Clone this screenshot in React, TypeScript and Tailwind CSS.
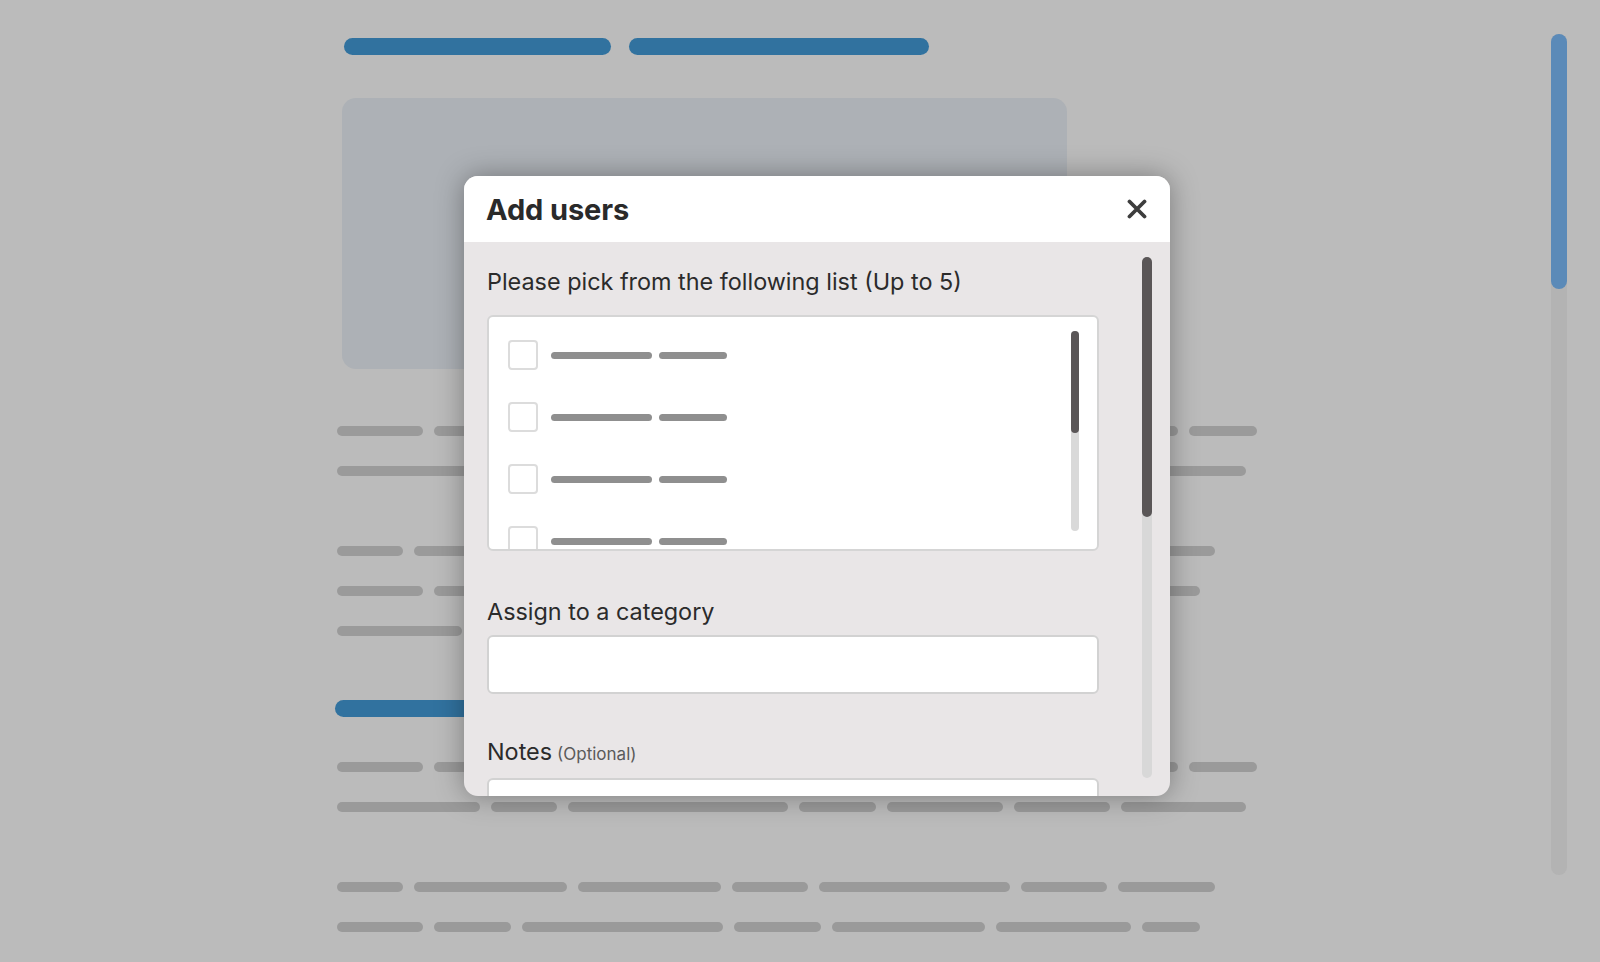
import React from "react";

// background placeholder rows (segment widths in px)
const rowA = [86, 126, 119, 179, 119, 157, 68];
const rowB = [143, 66, 220, 77, 116, 96, 125];
const rowC = [66, 153, 143, 76, 191, 86, 97];
const rowD = [86, 77, 201, 87, 153, 135, 58];
const rowE = [125];

const TextRow: React.FC<{ widths: number[]; className?: string }> = ({ widths, className = "" }) => (
  <div className={`flex gap-[11px] h-[10px] ml-[2px] ${className}`}>
    {widths.map((w, i) => (
      <div key={i} className="h-[10px] rounded-full bg-[#9a9a9a]" style={{ width: w }} />
    ))}
  </div>
);

const ListRow: React.FC = () => (
  <div className="flex items-center h-[30px] mb-[32px] shrink-0">
    <div className="w-[30px] h-[30px] rounded-[4px] border-2 border-[#dcdcdc] bg-white shrink-0" />
    <div className="ml-[13px] h-[7px] w-[101px] rounded-full bg-[#8f8f8f]" />
    <div className="ml-[7px] h-[7px] w-[68px] rounded-full bg-[#8f8f8f]" />
  </div>
);

const CloseIcon: React.FC = () => (
  <svg width="20" height="20" viewBox="0 0 20 20" fill="none">
    <path d="M2.5 2.5 L17.5 17.5 M17.5 2.5 L2.5 17.5" stroke="#3d3d3d" strokeWidth="3.8" strokeLinecap="round" />
  </svg>
);

export default function App() {
  return (
    <div className="relative w-[1600px] h-[962px] overflow-hidden bg-[#bbbbbb] font-['Inter',sans-serif]">
      {/* page behind the dialog */}
      <div className="flex flex-col pl-[335px] pt-[38px]">
        <div className="flex gap-[18px] ml-[9px]">
          <div className="h-[17px] w-[267px] rounded-full bg-[#31729f]" />
          <div className="h-[17px] w-[300px] rounded-full bg-[#31729f]" />
        </div>
        <div className="mt-[43px] ml-[7px] h-[271px] w-[725px] rounded-[14px] bg-[#adb1b6]" />

        <TextRow widths={rowA} className="mt-[57px]" />
        <TextRow widths={rowB} className="mt-[30px]" />

        <TextRow widths={rowC} className="mt-[70px]" />
        <TextRow widths={rowD} className="mt-[30px]" />
        <TextRow widths={rowE} className="mt-[30px]" />

        <div className="mt-[64px] h-[17px] w-[260px] rounded-full bg-[#31729f]" />

        <TextRow widths={rowA} className="mt-[45px]" />
        <TextRow widths={rowB} className="mt-[30px]" />

        <TextRow widths={rowC} className="mt-[70px]" />
        <TextRow widths={rowD} className="mt-[30px]" />
        <TextRow widths={rowE} className="mt-[30px]" />
      </div>

      {/* page scrollbar */}
      <div className="absolute left-[1551px] top-[34px] w-[16px] h-[841px] rounded-full bg-[#b3b3b3]">
        <div className="h-[255px] w-full rounded-full bg-[#5b8ab8]" />
      </div>

      {/* dialog */}
      <div className="absolute left-[464px] top-[176px] w-[706px] h-[620px] flex flex-col overflow-hidden rounded-[14px] bg-[#e9e6e7] shadow-[0_0_28px_rgba(0,0,0,0.35)]">
        <div className="flex items-center justify-between h-[66px] shrink-0 bg-white pl-[22px] pr-[23px]">
          <h2 className="pt-[2px] text-[29px] leading-[34px] font-bold text-[#2a2a2a] tracking-[-0.1px]">Add users</h2>
          <button className="flex items-center justify-center w-[20px] h-[20px]">
            <CloseIcon />
          </button>
        </div>

        <div className="flex flex-1 min-h-0">
          <div className="w-[635px] shrink-0 pl-[23px] pt-[24.5px] overflow-hidden text-[#2b2b2b]">
            <div className="text-[23.4px] leading-[30px]">Please pick from the following list (Up to 5)</div>

            <div className="mt-[18.5px] flex h-[236px] w-[612px] overflow-hidden rounded-[6px] border-2 border-[#d5d5d5] bg-white">
              <div className="flex flex-1 flex-col pl-[19px] pt-[23px] overflow-hidden">
                <ListRow />
                <ListRow />
                <ListRow />
                <ListRow />
              </div>
              <div className="mr-[18px] mt-[14px] h-[200px] w-[8px] rounded-full bg-[#d9d9d9]">
                <div className="h-[102px] w-full rounded-full bg-[#5a5657]" />
              </div>
            </div>

            <div className="mt-[45.5px] text-[23.4px] leading-[30px]">Assign to a category</div>
            <div className="mt-[8.5px] h-[59px] w-[612px] rounded-[6px] border-2 border-[#d2d2d2] bg-white" />

            <div className="mt-[42.5px] text-[23.4px] leading-[30px]">
              Notes<span className="ml-[5px] text-[17px] text-[#5a5a5a]">(Optional)</span>
            </div>
            <div className="mt-[9px] h-[59px] w-[612px] rounded-[6px] border-2 border-[#d2d2d2] bg-white" />
          </div>

          <div className="ml-[43px] mt-[15px] mb-[18px] w-[10px] rounded-full bg-[#d8d8d8]">
            <div className="h-[260px] w-full rounded-full bg-[#5a5657]" />
          </div>
        </div>
      </div>
    </div>
  );
}
